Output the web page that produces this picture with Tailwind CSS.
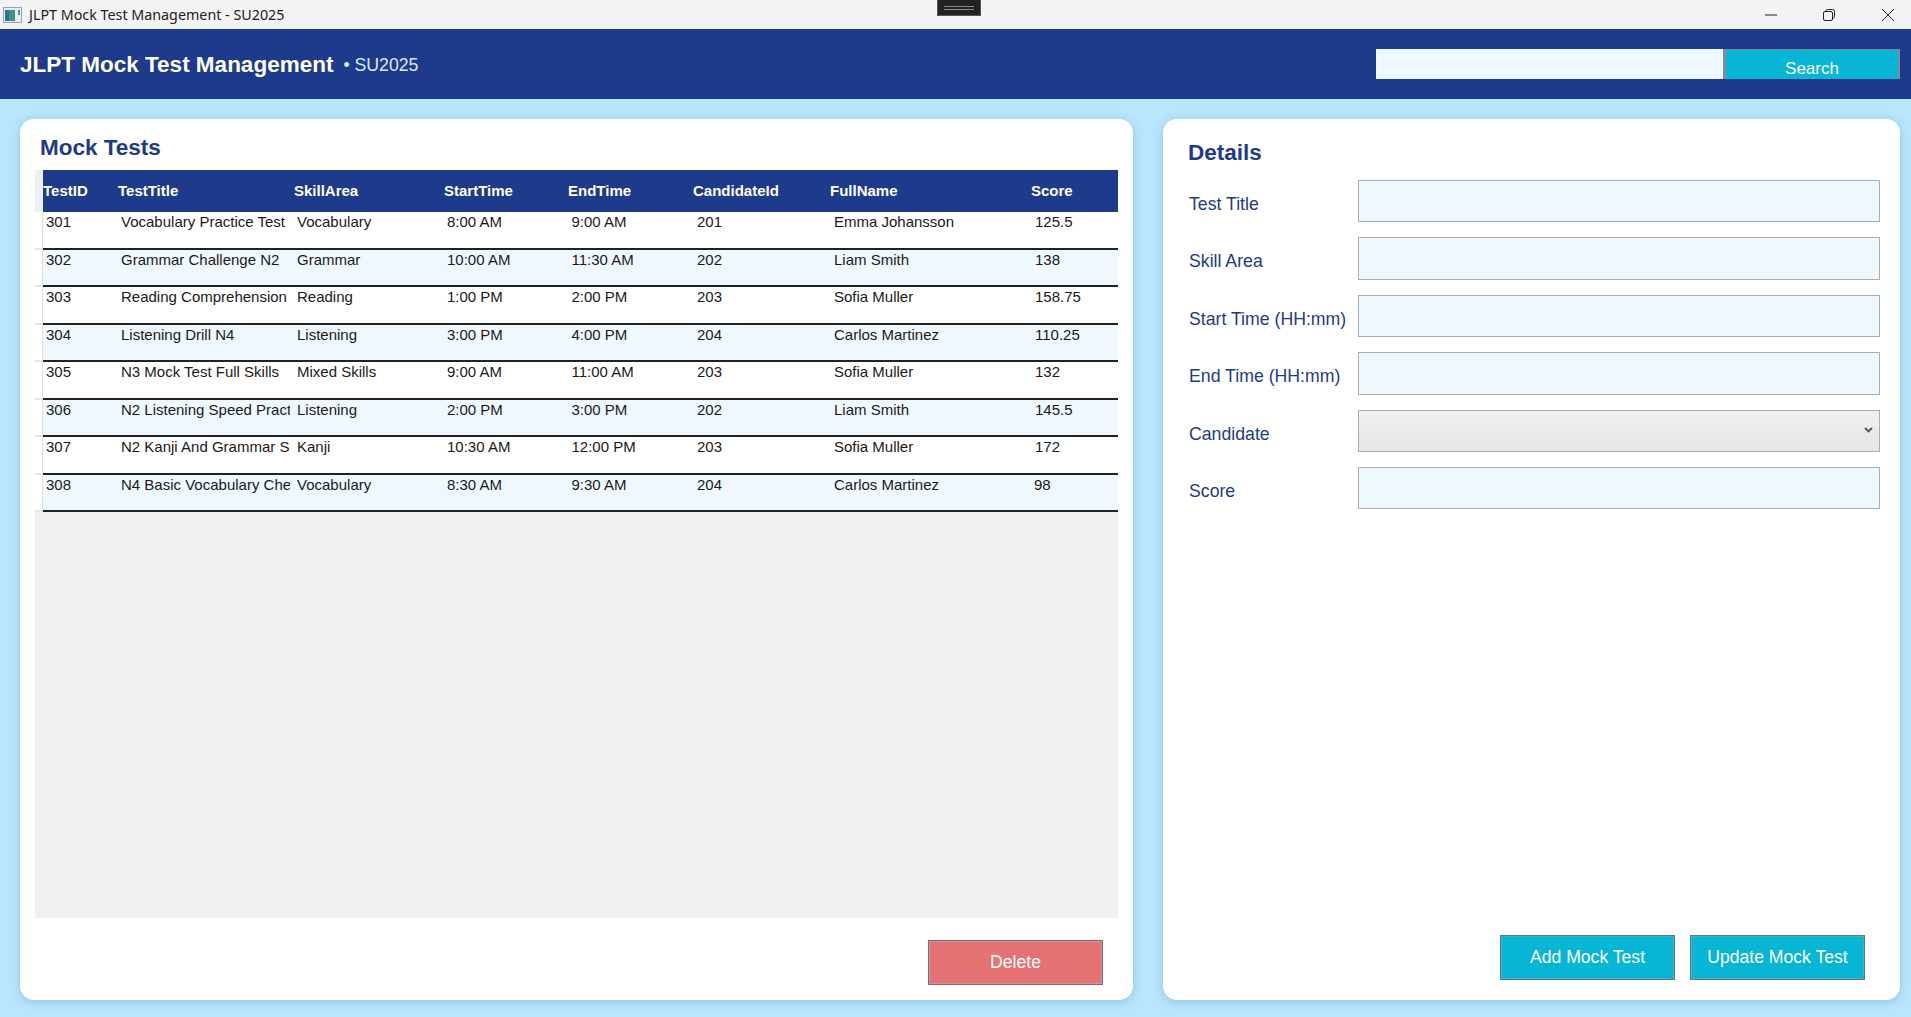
<!DOCTYPE html>
<html lang="en">
<head>
  <meta charset="UTF-8" />
  <title>JLPT Mock Test Management - SU2025</title>
  <script src="https://cdn.jsdelivr.net/npm/@tailwindcss/browser@4"></script>
</head>
<body class="h-screen overflow-hidden flex flex-col bg-[#b9e6fd] font-['Liberation_Sans',Arial,sans-serif] text-[#1a1a1a]">

  <!-- Window title bar -->
  <div class="h-[29px] shrink-0 bg-[#f3f3f3] flex items-center relative">
    <svg class="ml-[3px] w-[19px] h-[16px]" viewBox="0 0 19 16">
      <rect x="0.5" y="0.5" width="18" height="15" fill="#e8eef0" stroke="#9aa5ad" />
      <rect x="2" y="3" width="10" height="11" fill="#3f8f8a" />
      <rect x="2" y="3" width="4" height="11" fill="#2f6f9a" />
      <rect x="15" y="3" width="2" height="5" fill="#5a8fa5" />
    </svg>
    <span class="ml-[7px] text-[14.3px] font-['Noto_Sans',sans-serif] text-[#222]">JLPT Mock Test Management - SU2025</span>
    <div class="absolute left-[937px] top-0 w-[44px] h-[16px] bg-[#222] border border-t-0 border-[#555] flex flex-col items-center justify-center gap-[2px]">
      <div class="w-[30px] h-px bg-[#888]"></div>
      <div class="w-[30px] h-px bg-[#888]"></div>
    </div>
    <div class="ml-auto flex items-center">
      <svg class="w-[14px] h-[14px] mr-[44px]" viewBox="0 0 14 14"><path d="M1 7h12" stroke="#222" stroke-width="1" fill="none" /></svg>
      <svg class="w-[14px] h-[14px] mr-[45px]" viewBox="0 0 14 14" fill="none" stroke="#222" stroke-width="1"><rect x="1.5" y="3.5" width="9" height="9" rx="1.5" /><path d="M4 3.5V3a1.5 1.5 0 0 1 1.5-1.5h5A2 2 0 0 1 12.500 3.500v5A1.500 1.500 0 0 1 11 10h-.5" /></svg>
      <svg class="w-[14px] h-[14px] mr-[16px]" viewBox="0 0 14 14" fill="none" stroke="#222" stroke-width="1"><path d="M1 1l12 12M13 1L1 13" /></svg>
    </div>
  </div>

  <!-- App header -->
  <header class="h-[70px] shrink-0 bg-[#1e3a8a] flex items-center pl-[20px] pr-[11px]">
    <h1 class="mt-[2px] text-[22.5px] font-bold text-white">JLPT Mock Test Management</h1>
    <span class="ml-[10px] mt-[3px] text-[17.7px] text-[#dbeafe]">• SU2025</span>
    <div class="ml-auto flex h-[30px]">
      <input class="w-[347px] h-full bg-[#f0f8ff]" />
      <button class="w-[177px] h-[30px] overflow-hidden bg-[#06b6d4] border-t border-l-[3px] border-r-2 border-[#7f8b99] text-white text-[17px] leading-[38px]">Search</button>
    </div>
  </header>

  <main class="flex-1 flex gap-[30px] pt-[20px] pb-[17px] pl-[20px] pr-[11px] min-h-0">

    <!-- Mock tests list -->
    <section class="w-[1113px] bg-white rounded-[14px] shadow-[0_2px_10px_rgba(30,90,140,0.25)] pt-[14px] px-[15px] flex flex-col">
      <h2 class="pl-[5px] text-[22.5px] leading-[30px] font-bold text-[#1e3a8a] h-[37px]">Mock Tests</h2>
      <div class="h-[748px] bg-[#f0f0f0] flex flex-col text-[15px]">
        <div class="h-[42px] flex items-center ml-[8px] bg-[#1e3a8a] text-white font-bold">
          <div class="w-[75px]">TestID</div>
          <div class="w-[176px]">TestTitle</div>
          <div class="w-[150px]">SkillArea</div>
          <div class="w-[124px]">StartTime</div>
          <div class="w-[125px]">EndTime</div>
          <div class="w-[137px]">CandidateId</div>
          <div class="w-[201px]">FullName</div>
          <div class="w-[87px]">Score</div>
        </div>
        <div class="h-[37.5px] flex pl-[8px] bg-white border-b-2 border-[#e6e6e6]">
          <div class="flex flex-1 mb-[-2px] bg-white border-b-2 border-[#222] shadow-[-1px_0_0_#e0e0e0] pt-[1px] leading-[17px] whitespace-nowrap">
            <div class="w-[75px] pl-[3px] overflow-hidden">301</div>
            <div class="w-[172px] mr-[4px] pl-[3px] overflow-hidden">Vocabulary Practice Test</div>
            <div class="w-[150px] pl-[3px] overflow-hidden">Vocabulary</div>
            <div class="w-[124px] pl-[3px] overflow-hidden">8:00 AM</div>
            <div class="w-[125px] pl-[3.5px] overflow-hidden">9:00 AM</div>
            <div class="w-[137px] pl-[4px] overflow-hidden">201</div>
            <div class="w-[201px] pl-[4px] overflow-hidden">Emma Johansson</div>
            <div class="w-[87px] pl-[4px] overflow-hidden">125.5</div>
          </div>
        </div>
        <div class="h-[37.5px] flex pl-[8px] bg-white border-b-2 border-[#e6e6e6]">
          <div class="flex flex-1 mb-[-2px] bg-[#f0f8ff] border-b-2 border-[#222] shadow-[-1px_0_0_#e0e0e0] pt-[1px] leading-[17px] whitespace-nowrap">
            <div class="w-[75px] pl-[3px] overflow-hidden">302</div>
            <div class="w-[172px] mr-[4px] pl-[3px] overflow-hidden">Grammar Challenge N2</div>
            <div class="w-[150px] pl-[3px] overflow-hidden">Grammar</div>
            <div class="w-[124px] pl-[3px] overflow-hidden">10:00 AM</div>
            <div class="w-[125px] pl-[3.5px] overflow-hidden">11:30 AM</div>
            <div class="w-[137px] pl-[4px] overflow-hidden">202</div>
            <div class="w-[201px] pl-[4px] overflow-hidden">Liam Smith</div>
            <div class="w-[87px] pl-[4px] overflow-hidden">138</div>
          </div>
        </div>
        <div class="h-[37.5px] flex pl-[8px] bg-white border-b-2 border-[#e6e6e6]">
          <div class="flex flex-1 mb-[-2px] bg-white border-b-2 border-[#222] shadow-[-1px_0_0_#e0e0e0] pt-[1px] leading-[17px] whitespace-nowrap">
            <div class="w-[75px] pl-[3px] overflow-hidden">303</div>
            <div class="w-[172px] mr-[4px] pl-[3px] overflow-hidden">Reading Comprehension</div>
            <div class="w-[150px] pl-[3px] overflow-hidden">Reading</div>
            <div class="w-[124px] pl-[3px] overflow-hidden">1:00 PM</div>
            <div class="w-[125px] pl-[3.5px] overflow-hidden">2:00 PM</div>
            <div class="w-[137px] pl-[4px] overflow-hidden">203</div>
            <div class="w-[201px] pl-[4px] overflow-hidden">Sofia Muller</div>
            <div class="w-[87px] pl-[4px] overflow-hidden">158.75</div>
          </div>
        </div>
        <div class="h-[37.5px] flex pl-[8px] bg-white border-b-2 border-[#e6e6e6]">
          <div class="flex flex-1 mb-[-2px] bg-[#f0f8ff] border-b-2 border-[#222] shadow-[-1px_0_0_#e0e0e0] pt-[1px] leading-[17px] whitespace-nowrap">
            <div class="w-[75px] pl-[3px] overflow-hidden">304</div>
            <div class="w-[172px] mr-[4px] pl-[3px] overflow-hidden">Listening Drill N4</div>
            <div class="w-[150px] pl-[3px] overflow-hidden">Listening</div>
            <div class="w-[124px] pl-[3px] overflow-hidden">3:00 PM</div>
            <div class="w-[125px] pl-[3.5px] overflow-hidden">4:00 PM</div>
            <div class="w-[137px] pl-[4px] overflow-hidden">204</div>
            <div class="w-[201px] pl-[4px] overflow-hidden">Carlos Martinez</div>
            <div class="w-[87px] pl-[4px] overflow-hidden">110.25</div>
          </div>
        </div>
        <div class="h-[37.5px] flex pl-[8px] bg-white border-b-2 border-[#e6e6e6]">
          <div class="flex flex-1 mb-[-2px] bg-white border-b-2 border-[#222] shadow-[-1px_0_0_#e0e0e0] pt-[1px] leading-[17px] whitespace-nowrap">
            <div class="w-[75px] pl-[3px] overflow-hidden">305</div>
            <div class="w-[172px] mr-[4px] pl-[3px] overflow-hidden">N3 Mock Test Full Skills</div>
            <div class="w-[150px] pl-[3px] overflow-hidden">Mixed Skills</div>
            <div class="w-[124px] pl-[3px] overflow-hidden">9:00 AM</div>
            <div class="w-[125px] pl-[3.5px] overflow-hidden">11:00 AM</div>
            <div class="w-[137px] pl-[4px] overflow-hidden">203</div>
            <div class="w-[201px] pl-[4px] overflow-hidden">Sofia Muller</div>
            <div class="w-[87px] pl-[4px] overflow-hidden">132</div>
          </div>
        </div>
        <div class="h-[37.5px] flex pl-[8px] bg-white border-b-2 border-[#e6e6e6]">
          <div class="flex flex-1 mb-[-2px] bg-[#f0f8ff] border-b-2 border-[#222] shadow-[-1px_0_0_#e0e0e0] pt-[1px] leading-[17px] whitespace-nowrap">
            <div class="w-[75px] pl-[3px] overflow-hidden">306</div>
            <div class="w-[172px] mr-[4px] pl-[3px] overflow-hidden">N2 Listening Speed Practice</div>
            <div class="w-[150px] pl-[3px] overflow-hidden">Listening</div>
            <div class="w-[124px] pl-[3px] overflow-hidden">2:00 PM</div>
            <div class="w-[125px] pl-[3.5px] overflow-hidden">3:00 PM</div>
            <div class="w-[137px] pl-[4px] overflow-hidden">202</div>
            <div class="w-[201px] pl-[4px] overflow-hidden">Liam Smith</div>
            <div class="w-[87px] pl-[4px] overflow-hidden">145.5</div>
          </div>
        </div>
        <div class="h-[37.5px] flex pl-[8px] bg-white border-b-2 border-[#e6e6e6]">
          <div class="flex flex-1 mb-[-2px] bg-white border-b-2 border-[#222] shadow-[-1px_0_0_#e0e0e0] pt-[1px] leading-[17px] whitespace-nowrap">
            <div class="w-[75px] pl-[3px] overflow-hidden">307</div>
            <div class="w-[172px] mr-[4px] pl-[3px] overflow-hidden">N2 Kanji And Grammar Set</div>
            <div class="w-[150px] pl-[3px] overflow-hidden">Kanji</div>
            <div class="w-[124px] pl-[3px] overflow-hidden">10:30 AM</div>
            <div class="w-[125px] pl-[3.5px] overflow-hidden">12:00 PM</div>
            <div class="w-[137px] pl-[4px] overflow-hidden">203</div>
            <div class="w-[201px] pl-[4px] overflow-hidden">Sofia Muller</div>
            <div class="w-[87px] pl-[4px] overflow-hidden">172</div>
          </div>
        </div>
        <div class="h-[37.5px] flex pl-[8px] bg-white border-b-2 border-[#e6e6e6]">
          <div class="flex flex-1 mb-[-2px] bg-[#f0f8ff] border-b-2 border-[#222] shadow-[-1px_0_0_#e0e0e0] pt-[1px] leading-[17px] whitespace-nowrap">
            <div class="w-[75px] pl-[3px] overflow-hidden">308</div>
            <div class="w-[172px] mr-[4px] pl-[3px] overflow-hidden">N4 Basic Vocabulary Check</div>
            <div class="w-[150px] pl-[3px] overflow-hidden">Vocabulary</div>
            <div class="w-[124px] pl-[3px] overflow-hidden">8:30 AM</div>
            <div class="w-[125px] pl-[3.5px] overflow-hidden">9:30 AM</div>
            <div class="w-[137px] pl-[4px] overflow-hidden">204</div>
            <div class="w-[201px] pl-[4px] overflow-hidden">Carlos Martinez</div>
            <div class="w-[87px] pl-[3px] overflow-hidden">98</div>
          </div>
        </div>
      </div>
      <div class="flex justify-end mt-[22px] pr-[15px]">
        <button class="w-[175px] h-[45px] bg-[#e57373] border border-[#6b7280] shadow-[inset_0_0_0_1px_#e88a8a] text-white text-[17.6px]">Delete</button>
      </div>
    </section>

    <!-- Details form -->
    <section class="w-[737px] bg-white rounded-[14px] shadow-[0_2px_10px_rgba(30,90,140,0.25)] pt-[19px] pl-[25px] pr-[20px] flex flex-col">
      <h2 class="text-[22.5px] leading-[30px] font-bold text-[#1e3a8a] h-[42px]">Details</h2>
      <div class="flex flex-col gap-[15px] text-[#1e3a8a] text-[17.7px]">
        <div class="flex h-[42.4px]">
          <label class="w-[170px] pl-[1px] pt-[14px] leading-[20px]">Test Title</label>
          <input class="flex-1 bg-[#f0f8ff] border border-[#a9adb5]" />
        </div>
        <div class="flex h-[42.4px]">
          <label class="w-[170px] pl-[1px] pt-[14px] leading-[20px]">Skill Area</label>
          <input class="flex-1 bg-[#f0f8ff] border border-[#a9adb5]" />
        </div>
        <div class="flex h-[42.4px]">
          <label class="w-[170px] pl-[1px] pt-[14px] leading-[20px]">Start Time (HH:mm)</label>
          <input class="flex-1 bg-[#f0f8ff] border border-[#a9adb5]" />
        </div>
        <div class="flex h-[42.4px]">
          <label class="w-[170px] pl-[1px] pt-[14px] leading-[20px]">End Time (HH:mm)</label>
          <input class="flex-1 bg-[#f0f8ff] border border-[#a9adb5]" />
        </div>
        <div class="flex h-[42.4px]">
          <label class="w-[170px] pl-[1px] pt-[14px] leading-[20px]">Candidate</label>
          <div class="flex-1 bg-gradient-to-b from-[#f0f0f0] to-[#e5e5e5] border border-[#a9adb5] flex items-center justify-end pr-[6px]">
            <svg class="w-[9px] h-[6px] mb-[2px]" viewBox="0 0 9 6" fill="none" stroke="#555" stroke-width="1.800"><path d="M1 1l3.500 3.500L8 1" /></svg>
          </div>
        </div>
        <div class="flex h-[42.4px]">
          <label class="w-[170px] pl-[1px] pt-[14px] leading-[20px]">Score</label>
          <input class="flex-1 bg-[#f0f8ff] border border-[#a9adb5]" />
        </div>
      </div>
      <div class="mt-auto mb-[20px] flex justify-end gap-[15px] pr-[15px]">
        <button class="w-[175px] h-[45px] bg-[#06b6d4] border border-[#6b7280] shadow-[inset_0_0_0_1px_#2fb9d2] text-white text-[17.6px]">Add Mock Test</button>
        <button class="w-[175px] h-[45px] bg-[#06b6d4] border border-[#6b7280] shadow-[inset_0_0_0_1px_#2fb9d2] text-white text-[17.6px]">Update Mock Test</button>
      </div>
    </section>
  </main>
</body>
</html>
